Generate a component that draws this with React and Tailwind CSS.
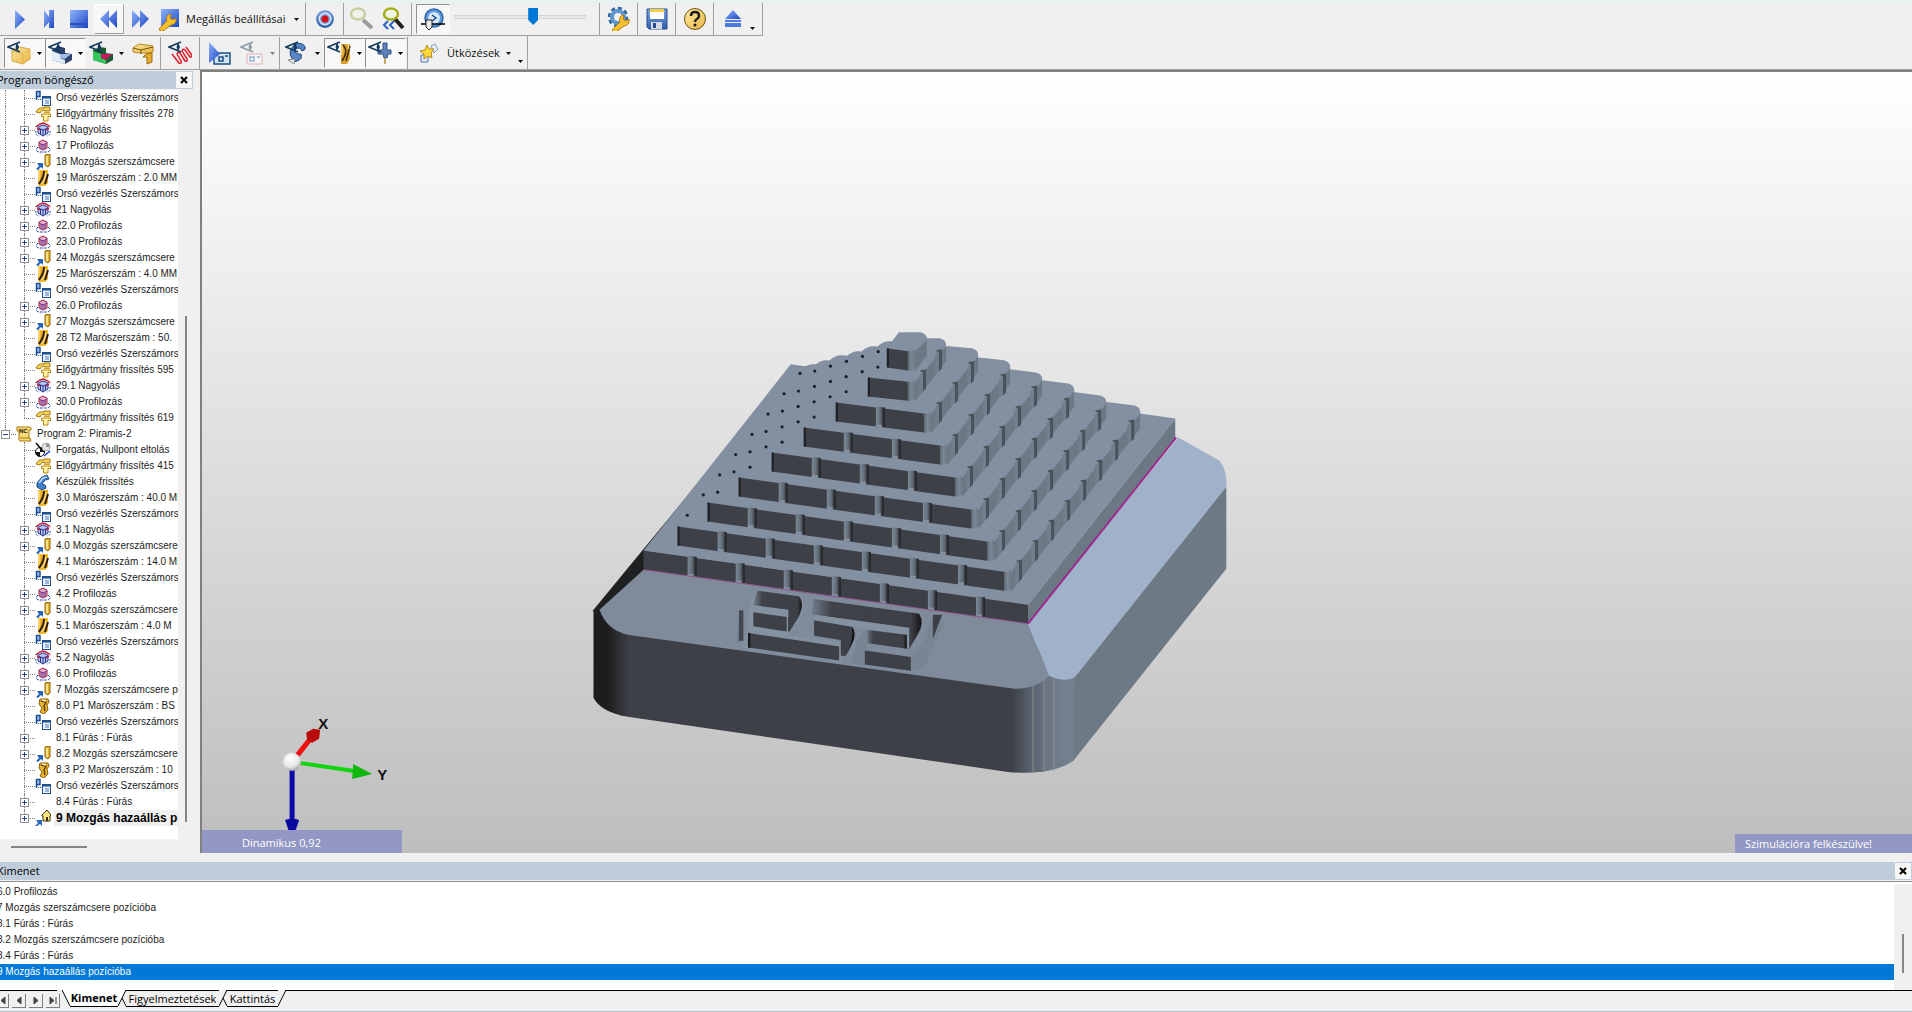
import React, { useState } from "react";

const ORSO = "Orsó vezérlés Szerszámorsó";

// program 1 operations, then the operations of program 2
const firstProgram = [
  { icon: "spindle", text: ORSO },
  { icon: "stock", text: "Előgyártmány frissítés 278" },
  { icon: "rough", text: "16 Nagyolás", open: true },
  { icon: "profile", text: "17 Profilozás", open: true },
  { icon: "move", text: "18 Mozgás szerszámcsere", open: true },
  { icon: "tool", text: "19 Marószerszám : 2.0 MM" },
  { icon: "spindle", text: ORSO },
  { icon: "rough", text: "21 Nagyolás", open: true },
  { icon: "profile", text: "22.0 Profilozás", open: true },
  { icon: "profile", text: "23.0 Profilozás", open: true },
  { icon: "move", text: "24 Mozgás szerszámcsere", open: true },
  { icon: "tool", text: "25 Marószerszám : 4.0 MM" },
  { icon: "spindle", text: ORSO },
  { icon: "profile", text: "26.0 Profilozás", open: true },
  { icon: "move", text: "27 Mozgás szerszámcsere", open: true },
  { icon: "tool", text: "28 T2 Marószerszám : 50." },
  { icon: "spindle", text: ORSO },
  { icon: "stock", text: "Előgyártmány frissítés 595" },
  { icon: "rough", text: "29.1 Nagyolás", open: true },
  { icon: "profile", text: "30.0 Profilozás", open: true },
  { icon: "stock", text: "Előgyártmány frissítés 619", last: true },
];

const secondProgram = [
  { icon: "origin", text: "Forgatás, Nullpont eltolás" },
  { icon: "stock", text: "Előgyártmány frissítés 415" },
  { icon: "fixture", text: "Készülék frissítés" },
  { icon: "tool", text: "3.0 Marószerszám : 40.0 MM" },
  { icon: "spindle", text: ORSO },
  { icon: "rough", text: "3.1 Nagyolás", open: true },
  { icon: "move", text: "4.0 Mozgás szerszámcsere", open: true },
  { icon: "tool", text: "4.1 Marószerszám : 14.0 MM" },
  { icon: "spindle", text: ORSO },
  { icon: "profile", text: "4.2 Profilozás", open: true },
  { icon: "move", text: "5.0 Mozgás szerszámcsere", open: true },
  { icon: "tool", text: "5.1 Marószerszám : 4.0 M" },
  { icon: "spindle", text: ORSO },
  { icon: "rough", text: "5.2 Nagyolás", open: true },
  { icon: "profile", text: "6.0 Profilozás", open: true },
  { icon: "move", text: "7 Mozgás szerszámcsere pozícióba", open: true },
  { icon: "drill", text: "8.0 P1 Marószerszám : BS" },
  { icon: "spindle", text: ORSO },
  { icon: "none", text: "8.1 Fúrás : Fúrás", open: true },
  { icon: "move", text: "8.2 Mozgás szerszámcsere", open: true },
  { icon: "drill", text: "8.3 P2 Marószerszám : 10" },
  { icon: "spindle", text: ORSO },
  { icon: "none", text: "8.4 Fúrás : Fúrás", open: true },
  { icon: "home", text: "9 Mozgás hazaállás pozícióba", open: true, last: true, active: true },
];

const outputLines = [
  "6.0 Profilozás",
  "7 Mozgás szerszámcsere pozícióba",
  "8.1 Fúrás : Fúrás",
  "8.2 Mozgás szerszámcsere pozícióba",
  "8.4 Fúrás : Fúrás",
  "9 Mozgás hazaállás pozícióba",
];

/* ---------- tree icons (16x16) ---------- */

const treeIcons = {
  spindle: (
    <>
      <path d="M1.500 1v9M1.500 1.500H5v5H1.500" fill="#9fc3ea" stroke="#1d4f94" strokeWidth="1.500" />
      <path d="M3 9.500h4" stroke="#1d4f94" strokeDasharray="1 1" />
      <rect x="7.500" y="6.500" width="8" height="9" fill="#eef5ff" stroke="#1d4f94" />
      <path d="M7 7.500h9" stroke="#1d4f94" strokeWidth="2" />
      <path d="M10 11h4M10 13h4" stroke="#4a7fc0" />
    </>
  ),
  stock: (
    <>
      <path d="M1 6Q3 1 9 2V1h6v4H9V4Q6 4 5 7z" fill="#f6d254" stroke="#a87b10" />
      <path d="M6.500 8h9v2.500H13V15H8.500v-4.500h-2z" fill="#fff0a8" stroke="#b58a16" />
      <path d="M9 6.500h6" stroke="#d9a520" />
    </>
  ),
  rough: (
    <>
      <path d="M3 5l5-2 5 2v6l-5 3-5-3z" fill="#b9c6ee" stroke="#27348b" />
      <path d="M3 6l5 2 5-2M8 8v6M5.500 7v5M10.500 7v5" stroke="#27348b" fill="none" />
      <path d="M1 5q1-2 7-4 6 2 7 4M2 6l3 2M14 6l-3 2" stroke="#c0223a" fill="none" strokeWidth="1.500" />
      <path d="M1 9q-1 4 3 5M15 9q1 4-3 5" stroke="#2a56b0" fill="none" strokeDasharray="2 1" />
    </>
  ),
  profile: (
    <>
      <path d="M4 4l4-2 4 2v6l-4 2-4-2z" fill="#e5b4cc" stroke="#9e1f47" />
      <path d="M4 5l4 2 4-2M8 7v5M6 6v5M10 6v5" stroke="#6c2c86" fill="none" />
      <path d="M3 9q-4 4 1 5h9q4-2 0-5" stroke="#2f4fb5" fill="none" strokeDasharray="3 1" />
    </>
  ),
  move: (
    <>
      <path d="M10 1l5-1v11l-2 2-3-2z" fill="#e7b32d" stroke="#8a6410" />
      <path d="M12 2v9" stroke="#fff0a8" strokeWidth="1.500" />
      <path d="M1 15l3-3-2-3h6v6l-2-2-3 3z" fill="#2567b5" />
    </>
  ),
  tool: (
    <>
      <path d="M3 0h10v13l-3 3H4l-1-2z" fill="#f0b429" />
      <path d="M9 1q0 6-5 13M13 4l-3 10" stroke="#2a1d05" strokeWidth="2" fill="none" />
      <path d="M4 1v9M11 3q0 5-4 11" stroke="#fff0b0" fill="none" />
    </>
  ),
  drill: (
    <>
      <path d="M5 1h8l1 3-2 3 1 5-4 4-4-2 2-4-3-4z" fill="#eab42e" stroke="#8a5f0c" />
      <path d="M6 3l5 1-2 4 1 5" stroke="#5c3d05" fill="none" strokeWidth="1.500" />
      <path d="M7 2l4 1" stroke="#fff4bd" strokeWidth="1.500" />
    </>
  ),
  origin: (
    <>
      <circle cx="5" cy="10" r="4.500" fill="#fff" stroke="#111" />
      <path d="M5 5.500a4.500 4.500 0 0 1 4.500 4.500H5zM5 14.500A4.500 4.500 0 0 1 .5 10H5z" fill="#111" />
      <circle cx="11" cy="5" r="4" fill="#e4e4e4" stroke="#aaa" />
      <path d="M11 1v4h4a4 4 0 0 0-4-4z" fill="#999" />
      <path d="M1 1l5 6" stroke="#111" strokeWidth="1.500" />
      <path d="M9 14l6-5" stroke="#1d3fd4" strokeWidth="1.500" />
    </>
  ),
  fixture: (
    <>
      <path d="M2 9l5-6 5-2 2 4-4 1-3 4 3 1 1 3-4 2-5-3z" fill="#3f7fc9" stroke="#1c4a86" />
      <path d="M4 9l4-5 4-1" stroke="#bcdcff" fill="none" strokeWidth="1.500" />
    </>
  ),
  home: (
    <>
      <path d="M7 5l5-5 4 5v1h-1v5H8V6H7z" fill="#ffe680" stroke="#3b3210" />
      <rect x="11" y="7" width="2" height="4" fill="#3b3210" />
      <path d="M0 16l3-3-2-3h6v6l-2-2-3 2z" fill="#2567b5" />
    </>
  ),
  program: (
    <>
      <path d="M1 1h13q2 1 1 3h-2v8q2 0 2 3H4q-2-1-1-4V5H1z" fill="#f7d877" stroke="#a87b10" />
      <path d="M4 12h10" stroke="#a87b10" />
      <text x="3" y="7" fontSize="6" fontWeight="bold" fontFamily="Liberation Sans, sans-serif" fill="#111">NC</text>
    </>
  ),
  none: null,
};

const TreeIcon = ({ name }) => (
  <svg viewBox="0 0 16 16" className="w-4 h-4 shrink-0" aria-hidden="true">
    {treeIcons[name]}
  </svg>
);

const Expander = ({ label, minus }) => (
  <button
    aria-label={label}
    className="absolute -left-[4px] top-[4px] w-[9px] h-[9px] bg-white border border-[#919191] flex items-center justify-center"
  >
    <svg viewBox="0 0 5 5" className="w-[5px] h-[5px] shrink-0">
      <path d={minus ? "M0 2.500h5" : "M0 2.500h5M2.500 0v5"} stroke="#2b3f8f" />
    </svg>
  </button>
);

const TreeRow = ({ item, outer }) => (
  <li className="flex h-4 items-center whitespace-nowrap">
    <span className={`ml-[5px] w-[19px] h-4 shrink-0 border-l border-dotted ${outer ? "border-[#808080]" : "border-transparent"}`} />
    <span className="relative w-[11px] h-4 shrink-0">
      <span className={`block border-l border-dotted border-[#808080] ${item.last ? "h-2" : "h-4"}`} />
      <span className="absolute left-0 top-2 w-[11px] border-t border-dotted border-[#808080]" />
      {item.open && <Expander label={`Kibontás: ${item.text}`} />}
    </span>
    <TreeIcon name={item.icon} />
    <span
      className={`ml-[3px] pl-[2px] h-4 leading-4 grow ${
        item.active ? "bg-[#f0f0f0] font-bold text-[12px] text-black" : ""
      }`}
    >
      {item.text}
    </span>
  </li>
);

/* ---------- toolbar pieces ---------- */

const Sep = () => <span className="w-px self-stretch mx-px bg-[#a0a0a0] shrink-0" />;

const Caret = ({ className = "" }) => (
  <svg viewBox="0 0 5 3" className={`w-[5px] h-[3px] shrink-0 ${className}`}>
    <path d="M0 0h5L2.500 3z" fill="currentColor" />
  </svg>
);

const ToolButton = ({ label, width, look = "", caret, children }) => (
  <button
    aria-label={label}
    className={`${width} h-[30px] shrink-0 flex items-center justify-center gap-[6px] border border-transparent ${look}`}
  >
    <svg viewBox="0 0 24 24" className="w-6 h-6 shrink-0">{children}</svg>
    {caret && <Caret className={caret} />}
  </button>
);

const pressed = "border-t-[#909090] border-l-[#909090] bg-[#f8f8f8]";
const raised = "border-b-[#a0a0a0] border-r-[#a0a0a0] border-t-white border-l-white bg-[#f7f7f7]";

const Eye = ({ color = "#123a5c" }) => (
  <>
    <path d="M13 1L1 6l12 5" fill="none" stroke={color} strokeWidth="1.500" />
    <path d="M10 3q3 3 0 6-2-3 0-6z" fill={color} stroke={color} />
  </>
);

const Defs = () => (
  <svg className="absolute w-0 h-0" aria-hidden="true">
    <defs>
      <linearGradient id="blue" x1="0" y1="0" x2="1" y2="1">
        <stop offset="0" stopColor="#8fb5fb" />
        <stop offset="1" stopColor="#1c45c4" />
      </linearGradient>
      <linearGradient id="gold" x1="0" y1="0" x2="1" y2="1">
        <stop offset="0" stopColor="#ffe9a0" />
        <stop offset="1" stopColor="#e8b544" />
      </linearGradient>
      <linearGradient id="steel" x1="0" y1="0" x2="0" y2="1">
        <stop offset="0" stopColor="#7ea4dd" />
        <stop offset="1" stopColor="#2f5fae" />
      </linearGradient>
      <linearGradient id="frontWall" gradientUnits="userSpaceOnUse" x1="593" y1="0" x2="1073" y2="0">
        <stop offset="0" stopColor="#1b1b1b" />
        <stop offset="0.030" stopColor="#1d1e1e" />
        <stop offset="0.075" stopColor="#3d4047" />
        <stop offset="0.870" stopColor="#3d4047" />
        <stop offset="0.910" stopColor="#58626d" />
        <stop offset="0.950" stopColor="#6d7885" />
        <stop offset="1" stopColor="#74828f" />
      </linearGradient>
      <linearGradient id="groove" x1="0" y1="0" x2="1" y2="0">
        <stop offset="0" stopColor="#7c8895" />
        <stop offset="0.500" stopColor="#626d78" />
        <stop offset="0.850" stopColor="#2a2e31" />
        <stop offset="1" stopColor="#1f2123" />
      </linearGradient>
      <linearGradient id="corner" x1="0" y1="0" x2="1" y2="0">
        <stop offset="0" stopColor="#5b656f" />
        <stop offset="0.500" stopColor="#7b8894" />
        <stop offset="1" stopColor="#6d7884" />
      </linearGradient>
      <linearGradient id="pocket" x1="0" y1="0" x2="1" y2="0">
        <stop offset="0" stopColor="#717d89" />
        <stop offset="0.180" stopColor="#3f4249" />
        <stop offset="0.900" stopColor="#3d4047" />
        <stop offset="1" stopColor="#151515" />
      </linearGradient>
      <radialGradient id="ball" cx="0.400" cy="0.300" r="0.800">
        <stop offset="0" stopColor="#ffffff" />
        <stop offset="0.600" stopColor="#e6e6e6" />
        <stop offset="1" stopColor="#8a8a8a" />
      </radialGradient>
    </defs>
  </svg>
);

const Wrench = () => (
  <path d="M2 22l8-8q-2-6 4-7l-1 4 3 2 3-2q1 6-5 7l-8 6q-3 1-4-2z" fill="#f6c12f" stroke="#b57d0c" />
);

const PlaybackToolbar = () => {
  const [speed, setSpeed] = useState(61);

  return (
    <div className="flex w-max items-center h-[33px] pl-1 border-b border-r border-[#a0a0a0]">
      <ToolButton label="Indítás" width="w-[30px]">
        <path d="M8 3l10 9.500L8 22z" fill="url(#blue)" />
      </ToolButton>
      <ToolButton label="Léptetés" width="w-[30px]">
        <path d="M7 3l5 7V3h5v18h-5v-6l-5 6z" fill="url(#blue)" />
      </ToolButton>
      <ToolButton label="Állj" width="w-[30px]">
        <path d="M3 3h18v18H3z" fill="url(#blue)" />
        <path d="M3 17h18" stroke="#2b4fbd" strokeWidth="2" />
      </ToolButton>
      <ToolButton label="Vissza" width="w-[30px]" look={raised}>
        <path d="M12 3v18L3 12zM20 3v18l-9-9z" fill="url(#blue)" />
      </ToolButton>
      <ToolButton label="Előre" width="w-[32px]">
        <path d="M4 3v18l9-9zM12 3v18l9-9z" fill="url(#blue)" />
      </ToolButton>
      <button className="flex items-center h-[30px] w-[148px] shrink-0 pl-px">
        <svg viewBox="0 0 24 24" className="w-6 h-6 mr-[5px] shrink-0">
          <path d="M4 2h18v18H4z" fill="url(#blue)" />
          <Wrench />
        </svg>
        <span className="grow text-left whitespace-nowrap">Megállás beállításai</span>
        <Caret className="mr-[5px]" />
      </button>
      <Sep />
      <ToolButton label="Felvétel" width="w-[35px]">
        <circle cx="12" cy="12" r="9" fill="url(#steel)" />
        <circle cx="12" cy="12" r="6.500" fill="#dbe7fb" />
        <circle cx="12" cy="12" r="5" fill="#7ea4dd" />
        <circle cx="12" cy="12" r="3.500" fill="#d1121b" />
      </ToolButton>
      <Sep />
      <ToolButton label="Keresés" width="w-[34px]">
        <path d="M13 13l9 8" stroke="#9a9a9a" strokeWidth="4" />
        <ellipse cx="8" cy="7" rx="7" ry="5.500" fill="#eef3ec" stroke="#c9cfa0" strokeWidth="2.500" />
      </ToolButton>
      <ToolButton label="Keresés visszafelé" width="w-[28px]">
        <path d="M14 12l8 9" stroke="#222" strokeWidth="4" />
        <ellipse cx="10" cy="7" rx="7" ry="5.500" fill="#eef6e6" stroke="#a5ac17" strokeWidth="2.500" />
        <path d="M7 14l-4 4 4 4M13 14l-4 4 4 4" stroke="#2c62c0" strokeWidth="2" fill="none" />
      </ToolButton>
      <span className="w-[3px] shrink-0" />
      <Sep />
      <span className="w-[3px] shrink-0" />
      <ToolButton label="Sebesség" width="w-[34px]" look={pressed}>
        <circle cx="13" cy="11" r="9" fill="#5b9ad8" stroke="#2e68ad" strokeWidth="1.500" />
        <circle cx="13" cy="11" r="6" fill="#d5e8f8" />
        <path d="M11 8l4 3-4 3" stroke="#1f4a80" strokeWidth="1.500" fill="none" />
        <path d="M0 17h24" stroke="#000" strokeWidth="1.500" />
        <path d="M5 13h6v7l-3 3-3-3z" fill="#eee" stroke="#222" />
      </ToolButton>
      <input
        type="range"
        aria-label="Szimuláció sebessége"
        value={speed}
        onChange={(e) => setSpeed(Number(e.target.value))}
        className="appearance-none bg-transparent w-[132px] h-[17px] ml-[4px] mr-[12px] mb-1 [&::-webkit-slider-runnable-track]:h-[4px] [&::-webkit-slider-runnable-track]:bg-[#e9ebeb] [&::-webkit-slider-runnable-track]:border [&::-webkit-slider-runnable-track]:border-[#d4d4d4] [&::-webkit-slider-thumb]:appearance-none [&::-webkit-slider-thumb]:w-[10px] [&::-webkit-slider-thumb]:h-[17px] [&::-webkit-slider-thumb]:-mt-[8px] [&::-webkit-slider-thumb]:bg-[#0078d7] [&::-webkit-slider-thumb]:[clip-path:polygon(0_0,100%_0,100%_70%,50%_100%,0_70%)]"
      />
      <Sep />
      <ToolButton label="Beállítások" width="w-[35px]">
        <circle cx="11" cy="10" r="6" fill="none" stroke="#5d95cc" strokeWidth="4" />
        <circle cx="11" cy="10" r="9" fill="none" stroke="#2e659f" strokeWidth="2.500" strokeDasharray="4 3" />
        <g transform="translate(3 1)">
          <Wrench />
        </g>
      </ToolButton>
      <Sep />
      <ToolButton label="Mentés" width="w-[35px]">
        <path d="M2 2h20v20H4l-2-2z" fill="url(#steel)" stroke="#244a8c" />
        <path d="M5 2h14v10H5z" fill="#fff" />
        <path d="M5 2h14v3H5z" fill="#f4cf4a" />
        <path d="M6 15h11v7H6z" fill="#d4dae4" />
        <path d="M8 16h3v5H8z" fill="#244a8c" />
      </ToolButton>
      <Sep />
      <ToolButton label="Súgó" width="w-[35px]">
        <circle cx="12" cy="12" r="10.500" fill="url(#gold)" stroke="#6b5413" />
        <path d="M8 9q0-4 4-4t4 4q0 2-2 3t-2 3" fill="none" stroke="#1d1d1d" strokeWidth="2.500" />
        <circle cx="12" cy="18" r="1.500" fill="#1d1d1d" />
      </ToolButton>
      <Sep />
      <ToolButton label="Kilépés" width="w-[35px]">
        <path d="M12 3l8 9H4z" fill="url(#blue)" />
        <path d="M4 13h16v2H4zM4 16h16v4H4z" fill="#4f7be0" />
      </ToolButton>
      <button aria-label="További gombok" className="self-end w-[12px] pb-[5px]">
        <Caret />
      </button>
    </div>
  );
};

const ViewToolbar = () => (
  <div className="flex w-max items-center h-[33px] pl-1 pt-px border-r border-[#a0a0a0]">
    <ToolButton label="Előgyártmány" width="w-[41px]" look={pressed} caret="text-black">
      <path d="M5 9l7-3 11 2v10l-7 5-11-3z" fill="url(#gold)" stroke="#d9ab45" />
      <path d="M5 10l11 3 7-4M16 13v9" stroke="#dfb353" fill="none" />
      <Eye />
    </ToolButton>
    <ToolButton label="Munkadarab" width="w-[41px]" look={pressed} caret="text-black">
      <path d="M4 9l6-4 7 2v5l7 1v6l-7 4-13-4z" fill="#2c3f6b" />
      <path d="M4 10l8 3v4l5 2v4l-13-4z" fill="#e1ecf9" />
      <path d="M12 13l11 0-6 5-5-1z" fill="#9dbbe4" />
      <Eye />
    </ToolButton>
    <ToolButton label="Összehasonlítás" width="w-[40px]" caret="text-black">
      <path d="M4 9l7-3 6 1v5l7 1v6l-7 4-13-4z" fill="#1d5a32" />
      <path d="M4 10l8 3v4l5 2v4l-13-4z" fill="#35c65e" />
      <path d="M12 13l11 0-6 6-5-2z" fill="#c01c5e" />
      <Eye />
    </ToolButton>
    <ToolButton label="Forgács" width="w-[33px]">
      <path d="M2 7l6-4 14 2v6l-4 1H9l-7-1z" fill="url(#gold)" stroke="#b6851d" />
      <path d="M2 7l8 2 12-3M10 9v4" stroke="#6e4f0c" fill="none" />
      <path d="M15 13l6-1v9l-5 2v-7h-4z" fill="#e5aa2e" stroke="#9a6d10" />
    </ToolButton>
    <Sep />
    <ToolButton label="Szerszámpálya" width="w-[36px]">
      <path
        d="M4 13l7 9q3 1 2-2l-4-7q1-3 3-1l5 8q3 1 2-2l-5-8q1-3 3-1l5 7q3 0 1-3l-5-7"
        fill="none"
        stroke="#e0202a"
        strokeWidth="1.500"
      />
      <Eye />
    </ToolButton>
    <Sep />
    <ToolButton label="Gép nézet" width="w-[36px]">
      <path d="M7 12h16v11H7z" fill="#cfe4f5" stroke="#1d4f80" strokeWidth="1.500" />
      <path d="M2 1l11 12-11 9z" fill="url(#blue)" />
      <path d="M12 16h4v4h-4zM18 15h3" stroke="#1d4f80" fill="none" strokeWidth="1.500" />
    </ToolButton>
    <ToolButton label="Gép láthatóság" width="w-[41px]" caret="text-[#808080]">
      <path d="M7 13h15v10H7z" fill="#f3f3f8" stroke="#e2b0b4" />
      <path d="M10 16h4v4h-4zM17 16h3" stroke="#9db7cc" fill="none" strokeWidth="1.500" />
      <Eye color="#8d9aa3" />
    </ToolButton>
    <Sep />
    <ToolButton label="Készülék" width="w-[43px]" caret="text-black">
      <path d="M10 3q8-2 10 3 1 3-3 4l-2-3q-6 0-5 4 1 3 6 2 2 5-4 7l-3 1-2-4q-5-6 3-14z" fill="#5686c6" stroke="#1e3f72" />
      <path d="M3 19l6 4 1-5z" fill="#eee" stroke="#888" />
      <Eye />
    </ToolButton>
    <ToolButton label="Szerszám" width="w-[41px]" look={pressed} caret="text-black">
      <path d="M14 3h9v15l-3 5h-6z" fill="#dba22a" />
      <path d="M16 4q6 6-1 16M23 5l-4 15" stroke="#3a2705" strokeWidth="1.500" fill="none" />
      <path d="M15 4v10M21 3l1 5" stroke="#ffe9a0" />
      <Eye />
    </ToolButton>
    <ToolButton label="Szerszámtartó" width="w-[41px]" look={pressed} caret="text-black">
      <path d="M15 2h4v7h4v4h-3l-1 4h-3l-1-4h-5V9h5z" fill="#5c82b8" stroke="#33527f" />
      <path d="M17 17v6" stroke="#c9a96a" strokeWidth="2" />
      <Eye />
    </ToolButton>
    <Sep />
    <button className="flex items-center h-[30px] w-[103px] shrink-0 pl-2">
      <svg viewBox="0 0 24 24" className="w-6 h-6 mr-[6px] shrink-0">
        <path d="M4 14h7v7H4z" fill="#dfeaf8" stroke="#5577aa" />
        <path d="M14 5l4-2 3 5-4 4z" fill="#e8eef8" stroke="#8899bb" />
        <path d="M10 4l2 4h5l-3 4 1 5-4-2-4 3v-5l-4-3 5-1z" fill="#ffd83b" stroke="#b98a12" />
      </svg>
      <span className="grow text-left whitespace-nowrap">Ütközések</span>
      <Caret className="mr-px" />
    </button>
    <button aria-label="További gombok" className="self-end w-[15px] pb-[6px] pl-[6px]">
      <Caret />
    </button>
  </div>
);

/* ---------- simulation view ---------- */

// each step: front left corner, front right corner, back right corner
const steps = [
  { l: [643, 551], r: [1027, 605], b: [1174, 419] },
  { l: [677, 527], r: [1010, 573], b: [1139, 410] },
  { l: [707, 503], r: [993, 543], b: [1105, 400] },
  { l: [738, 478], r: [977, 511], b: [1073, 388] },
  { l: [771, 453], r: [961, 479], b: [1041, 377] },
  { l: [803, 428], r: [946, 447], b: [1009, 365] },
  { l: [835, 403], r: [930, 415], b: [977, 353] },
  { l: [867, 378], r: [914, 383], b: [945, 343] },
  { l: [886, 349], r: [914, 353], b: [926, 337] },
];

const holes = [
  [658, 162], [702, 155], [749, 140], [797, 126], [845, 111], [892, 97],
  [610, 223], [653, 215], [701, 201], [749, 186], [796, 172], [844, 157], [891, 143],
  [562, 284], [605, 275], [652, 261], [700, 247], [748, 232], [796, 217],
  [514, 345], [556, 336], [604, 322], [652, 307], [700, 293],
  [465, 405], [508, 397], [556, 382], [604, 368],
  [417, 466], [460, 457], [508, 443],
  [368, 526], [411, 518], [320, 587],
];

const STEP_H = 19;

const Step = ({ step, level }) => {
  const [lx, ly] = step.l;
  const [rx, ry] = step.r;
  const [bx, by] = step.b;
  const slope = (ry - ly) / (rx - lx);
  const dx = bx - rx;
  const dy = by - ry;
  const frontY = (x) => ly + (x - lx) * slope;
  const round = level === 0 ? 0 : 7;
  const wallEnd = rx - round;
  const inset = round ? 3 : 0;

  const grooves = [];
  if (level < 7) {
    for (let x = lx + (level === 0 ? 44 : 40); x < wallEnd - 20; x += 48) grooves.push(x);
  }

  const notches = [];
  if (level > 0 && level < 8) {
    for (let i = 0; i < 9 - level; i++) notches.push([rx + 9 + i * 16, ry - 11 - i * 20]);
  }

  // the bottom step has sharp corners, the others are rounded
  const frontCorner = level === 0
    ? `L${rx} ${ry}`
    : `Q${rx} ${ry + 1} ${rx + 2} ${ry - 4}`;
  const backCorner = level === 0
    ? `L${bx} ${by}`
    : `L${bx} ${by + 4}Q${bx + 1} ${by - 2} ${bx - 6} ${by - 4}`;
  const leftCorner = level === 0 || level === 8
    ? `L${lx + dx} ${ly + dy}`
    : `L${lx + dx + 8} ${ly + dy + 1}Q${lx + dx + 2} ${ly + dy} ${lx + dx - 4} ${ly + dy + 5}`;

  return (
    <g>
      {/* side wall */}
      <path d={`M${rx} ${ry}L${bx} ${by + inset}v${STEP_H - inset}L${rx} ${ry + STEP_H}z`} fill="#6d7885" />
      {/* top */}
      <path
        d={`M${lx} ${ly}L${wallEnd} ${frontY(wallEnd)}${frontCorner}${backCorner}${leftCorner}z`}
        fill="#8390a2"
      />
      {notches.map(([x, y]) => (
        <g key={x}>
          <path d={`M${x - 4} ${y - 1}l6-1v${STEP_H}l-3 3v-18z`} fill="#48525a" />
          <path d={`M${x - 5} ${y + 4}l4-4v${STEP_H}l-4 4z`} fill="#727e8b" />
        </g>
      ))}
      {/* front wall */}
      <path d={`M${lx} ${ly}L${wallEnd} ${frontY(wallEnd)}v${STEP_H}L${lx} ${ly + STEP_H}z`} fill="#3d4047" />
      {level > 0 && <path d={`M${lx} ${ly}h2v${STEP_H}h-2z`} fill="#1d1f21" />}
      {grooves.map((x) => (
        <g key={x}>
          <path d={`M${x} ${frontY(x) - 1}l9 1v${STEP_H}l-9 1z`} fill="url(#groove)" />
          <path d={`M${x} ${frontY(x) + STEP_H - 2}l6 0v3h-6z`} fill="#8390a2" />
        </g>
      ))}
      {round > 0 && (
        <path d={`M${wallEnd} ${frontY(wallEnd)}h4l3-2v${STEP_H}l-3 2h-4z`} fill="url(#corner)" />
      )}
    </g>
  );
};

const Lettering = () => (
  <g transform="translate(580 560) scale(0.3333)">
    <path d="M500 215q0-110 45-124l112 16q20 25 6 60l-40 60 160 20v58l-300-42z" fill="#8491a0" />
    <path d="M470 250q-4-20 8-98h10v92z" fill="#748090" />
    <path d="M475 152h13v91h-13z" fill="#444750" />
    <path d="M530 93l125 17q18 22 0 60l-28 45h-5v-65l-104-14z" fill="url(#pocket)" />
    <path d="M518 140l105 12v20l-103-14z" fill="#8491a0" />
    <path d="M518 158l100 14v43l-100-15z" fill="#3d4047" />
    <path d="M502 220l273 40v42l-273-39z" fill="#3d4047" />
    <path d="M502 220h7v44l-7-1z" fill="#1a1a1a" />
    <path d="M698 118l317 44q17 28-5 63l-25 43-7-3v-60l-285-41z" fill="url(#pocket)" />
    <path d="M700 165l285 39v62l-7-1-2-40-276-40z" fill="#8491a0" />
    <path d="M700 182l115 20q14 18-3 53l-17 33h-15v-47l-80-13z" fill="#3d4047" />
    <path d="M813 201q18 20-2 56l-16 31q26-50 18-87z" fill="#151515" />
    <path d="M855 210l123 15v42l-123-17z" fill="url(#pocket)" />
    <path d="M810 310q20-90 50-100v38l-12 68z" fill="#778492" />
    <path d="M852 272l138 20v41l-138-19z" fill="#3d4047" />
    <path d="M990 292q30-20 60-110l40 10-60 130-40 15z" fill="#788593" />
    <path d="M1056 165h28l-28 72z" fill="#3d4047" />
  </g>
);

const PartModel = () => (
  <g>
    {/* block walls */}
    <path
      d="M593 611V698Q600 712 627 717L1007 772Q1050 776 1072 761L1075 757V674L1027 640L640 600z"
      fill="url(#frontWall)"
    />
    <path d="M1032 686v87M1043 680v92M1053 677v94" stroke="#8f8f8c" strokeWidth="1" />
    <path d="M1073 678L1225 487V569L1072 761z" fill="#6e7986" />
    {/* chamfers */}
    <path d="M593 611L755 414 643 551V570L600 611z" fill="#1f2021" stroke="#1f2021" />
    <path d="M643 570L599 610Q606 630 627 635L1013 689Q1036 689 1048 676L1027 624z" fill="#7f8b9b" />
    <path d="M1027 624L1048 676Q1062 683 1073 678L1225 487Q1226 470 1218 461L1177 438z" fill="#a0b1ca" />
    <Lettering />
    {steps.map((step, level) => (
      <Step key={level} step={step} level={level} />
    ))}
    {holes.map(([x, y]) => (
      <circle key={`${x}-${y}`} cx={580 + x / 3} cy={320 + y / 3} r="1.600" fill="#1c1c30" />
    ))}
    <path d="M643 570L1027 624" stroke="#93528f" strokeWidth="1" />
    <path d="M1027 624L1175 438" stroke="#9a2a8c" strokeWidth="2" />
  </g>
);

const AxisTriad = () => (
  <g fontFamily="Liberation Sans, sans-serif" fontSize="15" fontWeight="bold" fill="#111">
    <path d="M292 762v60" stroke="#0a0aa8" strokeWidth="5" />
    <path d="M285 820q7-3 14 0l-4 12h-6z" fill="#0a0aa0" />
    <path d="M292 762l19-24" stroke="#ee1111" strokeWidth="5" />
    <path d="M306 733l7-4 7 1-1 9-7 4-5-3z" fill="#b80c0c" />
    <path d="M292 762l62 9" stroke="#12d512" strokeWidth="4" />
    <path d="M353 764l19 10-20 5z" fill="#0fb70f" />
    <circle cx="292" cy="762" r="9" fill="url(#ball)" />
    <text x="318" y="729">X</text>
    <text x="377" y="780">Y</text>
  </g>
);

const SimulationView = () => (
  <main className="relative grow min-w-0 border-t-2 border-l-2 border-[#808080] bg-gradient-to-b from-white to-[#bebebe] overflow-hidden text-white">
    <svg viewBox="202 73 1710 780" preserveAspectRatio="xMinYMax slice" className="absolute inset-0 w-full h-full">
      <PartModel />
      <AxisTriad />
    </svg>
    <div className="absolute left-0 bottom-0 w-[200px] h-[23px] pl-10 leading-[26px] bg-[#9298c3]">Dinamikus 0,92</div>
    <div className="absolute right-0 bottom-0 w-[177px] h-[19px] pl-[10px] leading-[19px] bg-[#9298c3]">
      Szimulációra felkészülve!
    </div>
  </main>
);

/* ---------- panels ---------- */

const PanelHeader = ({ title }) => (
  <div className="flex h-[18px] shrink-0 items-center justify-between bg-[#bfcddb] text-black">
    <h2 className="-ml-[3px] whitespace-nowrap">{title}</h2>
    <button aria-label={`${title} bezárása`} className="w-[16px] h-[16px] mr-px bg-[#f6f6f6] flex items-center justify-center">
      <svg viewBox="0 0 8 8" className="w-2 h-2">
        <path d="M1 1l6 6M7 1L1 7" stroke="#000" strokeWidth="2" />
      </svg>
    </button>
  </div>
);

const ProgramBrowser = () => (
  <aside className="w-[193px] mr-[7px] pt-px shrink-0 flex flex-col">
    <PanelHeader title="Program böngésző" />
    <div className="flex grow min-h-0 mt-px">
      <ul className="w-[178px] bg-white overflow-hidden font-['Liberation_Sans',sans-serif] text-[10px] leading-4 text-[#1c1c1c]">
        {firstProgram.map((item, i) => (
          <TreeRow key={i} item={item} outer />
        ))}
        <li className="flex h-4 items-center whitespace-nowrap">
          <span className="relative ml-[5px] w-[11px] h-4 shrink-0">
            <span className="block h-2 border-l border-dotted border-[#808080]" />
            <span className="absolute left-0 top-2 w-[11px] border-t border-dotted border-[#808080]" />
            <Expander label="Összecsukás: Program 2" minus />
          </span>
          <TreeIcon name="program" />
          <span className="ml-[5px]">Program 2: Piramis-2</span>
        </li>
        {secondProgram.map((item, i) => (
          <TreeRow key={i} item={item} />
        ))}
      </ul>
      <div className="grow flex justify-center pt-[226px] pb-[17px]">
        <span className="w-[2px] bg-[#858585]" />
      </div>
    </div>
    <div className="h-[14px] shrink-0 pl-[11px] pt-[7px]">
      <span className="block w-[76px] h-[2px] bg-[#858585]" />
    </div>
  </aside>
);

const navPaths = ["M2 1v7M8 1v7L4 4.500z", "M7 1v7L3 4.500z", "M3 1v7l4-3.500z", "M2 1v7l4-3.500zM8 1v7"];
const navLabels = ["Első", "Előző", "Következő", "Utolsó"];

const Slant = ({ down, selected, both }) => (
  <svg viewBox="0 0 8 17" className="w-2 h-[17px] shrink-0">
    {down ? (
      <path d="M0 0h8v16z" fill={selected ? "#fff" : "#f0f0f0"} />
    ) : (
      <path d="M0 0h8L0 16z" fill={selected ? "#fff" : "#f0f0f0"} />
    )}
    <path d={down ? "M0 0l8 16" : both ? "M8 0L0 16M4 8l4 8" : "M8 0L0 16"} stroke="#000" fill="none" />
  </svg>
);

const OutputPanel = () => {
  const [selected, setSelected] = useState(5);

  return (
    <section className="shrink-0 mt-[9px] flex flex-col">
      <PanelHeader title="Kimenet" />
      <div className="h-[4px] border-b-2 border-white flex flex-col justify-end">
        <span className="h-px bg-[#8f8f8f]" />
      </div>
      <div className="flex h-[106px] bg-white">
        <ul className="grow font-['Liberation_Sans',sans-serif] text-[10px] text-[#1c1c1c] overflow-hidden">
          {outputLines.map((line, i) => (
            <li key={line} className="h-4">
              <button
                onClick={() => setSelected(i)}
                className={`block w-full h-4 leading-4 text-left ${i === selected ? "bg-[#0078d7] text-white" : ""}`}
              >
                <span className="-ml-[3px]">{line}</span>
              </button>
            </li>
          ))}
        </ul>
        <div className="w-[18px] shrink-0 bg-[#f0f0f0] flex justify-center pt-[50px] pb-[17px]">
          <span className="w-[2px] bg-[#858585]" />
        </div>
      </div>
      <div className="flex h-[22px] border-b border-[#b9c4c4] text-black">
        <div className="flex h-[19px] w-[62px] border-t border-black items-center gap-[3px] pl-[9px] -ml-[14px] box-content shrink-0 mr-[5px]">
          {navPaths.map((d, i) => (
            <button
              key={d}
              aria-label={navLabels[i]}
              className="w-[14px] h-[14px] border-r border-b border-[#808080] flex items-center justify-center shrink-0"
            >
              <svg viewBox="0 0 10 9" className="w-[10px] h-[9px]">
                <path d={d} fill="#444" stroke="#444" strokeWidth="1" />
              </svg>
            </button>
          ))}
        </div>
        <Slant down selected />
        <button className="h-[17px] w-[48px] bg-white border-b border-black font-bold leading-4 whitespace-nowrap">Kimenet</button>
        <Slant selected both />
        <button className="h-[17px] w-[93px] border-b border-t border-black leading-4 whitespace-nowrap">Figyelmeztetések</button>
        <Slant both />
        <button className="h-[17px] w-[51px] border-b border-t border-black leading-4 whitespace-nowrap">Kattintás</button>
        <Slant />
        <span className="grow border-t border-black" />
      </div>
    </section>
  );
};

const App = () => (
  <div className="h-screen flex flex-col overflow-hidden bg-[#f0f0f0] font-['Open_Sans','Noto_Sans',sans-serif] text-[11px] text-[#111]">
    <Defs />
    <header className="shrink-0 border-t-[3px] border-[#e6f3f4]">
      <PlaybackToolbar />
      <ViewToolbar />
      <div className="h-px bg-[#a0a0a0]" />
    </header>
    <div className="flex grow min-h-0">
      <ProgramBrowser />
      <SimulationView />
    </div>
    <OutputPanel />
  </div>
);

export default App;
